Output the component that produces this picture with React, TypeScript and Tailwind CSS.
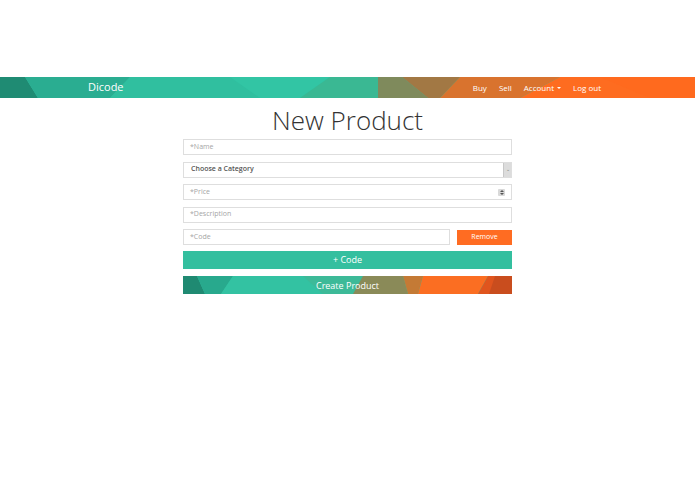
import React from 'react';

const font = { fontFamily: '"Open Sans", "Liberation Sans", sans-serif' };

function NavArt() {
  return (
    <svg className="absolute inset-0 h-full w-full" viewBox="0 0 695 21" preserveAspectRatio="none">
      <rect width="695" height="21" fill="#2fc0a0" />
      <polygon points="0,0 25,0 38,21 0,21" fill="#1f8b73" />
      <polygon points="25,0 130,0 110,21 38,21" fill="#2aad91" />
      <polygon points="130,0 230,0 260,21 110,21" fill="#30bf9f" />
      <polygon points="230,0 330,0 300,21 260,21" fill="#32c5a4" />
      <polygon points="330,0 378,0 378,21 300,21" fill="#3ab893" />
      <polygon points="378,0 402,0 428,21 378,21" fill="#7f8a5c" />
      <polygon points="402,0 460,0 440,21 428,21" fill="#a27844" />
      <polygon points="460,0 560,0 520,21 440,21" fill="#d9732e" />
      <polygon points="560,0 695,0 695,21 520,21" fill="#fe6c20" />
      <polygon points="600,0 695,0 695,21 650,21" fill="#ff6a1e" />
    </svg>
  );
}

function ButtonArt() {
  return (
    <svg className="absolute inset-0 h-full w-full" viewBox="0 0 329 18" preserveAspectRatio="none">
      <rect width="329" height="18" fill="#33bf9f" />
      <polygon points="0,0 14,0 22,18 0,18" fill="#1f8a72" />
      <polygon points="14,0 50,0 38,18 22,18" fill="#28a98d" />
      <polygon points="50,0 120,0 140,18 38,18" fill="#33c2a2" />
      <polygon points="120,0 180,0 170,18 140,18" fill="#3dba98" />
      <polygon points="180,0 220,0 225,18 170,18" fill="#8a8a58" />
      <polygon points="220,0 240,0 235,18 225,18" fill="#c47a35" />
      <polygon points="240,0 305,0 295,18 235,18" fill="#fb6e22" />
      <polygon points="305,0 329,0 329,18 295,18" fill="#e0551e" />
      <polygon points="312,0 329,0 329,18 306,18" fill="#c94d1e" />
    </svg>
  );
}

function Field({ placeholder, spinner }: { placeholder: string; spinner?: boolean }) {
  return (
    <div className="flex h-4 items-center justify-between border border-[#dedede] bg-white px-[6px]">
      <span className="text-[7px] text-[#a5a5a5]">{placeholder}</span>
      {spinner && (
        <span className="flex h-[7px] w-[7px] flex-col items-center justify-center gap-[1px] rounded-[1px] bg-[#d9d9d9]">
          <span className="h-0 w-0 border-x-[2px] border-b-[2px] border-x-transparent border-b-[#555]" />
          <span className="h-0 w-0 border-x-[2px] border-t-[2px] border-x-transparent border-t-[#555]" />
        </span>
      )}
    </div>
  );
}

export default function App() {
  return (
    <div className="min-h-screen bg-white" style={font}>
      <div className="h-[77px]" />
      <nav className="relative h-[21px] w-full overflow-hidden">
        <NavArt />
        <div className="relative flex h-full items-center">
          <span className="ml-[88px] text-[11px] text-white">Dicode</span>
          <div className="ml-auto mr-[94px] flex items-center gap-[12px] text-[8px] text-white">
            <span>Buy</span>
            <span>Sell</span>
            <span className="flex items-center gap-[3px]">
              Account
              <span className="h-0 w-0 border-x-[2px] border-t-[2px] border-x-transparent border-t-white" />
            </span>
            <span>Log out</span>
          </div>
        </div>
      </nav>

      <div className="mx-auto w-[329px]">
        <h1 className="mt-[10px] text-center text-[26px] font-light leading-[24px] text-[#333]">New Product</h1>

        <div className="mt-[7px] flex flex-col gap-[6.5px]">
          <Field placeholder="*Name" />
          <div className="flex h-4 items-center justify-between border border-[#dedede] bg-white pl-[7px]">
            <span className="text-[7px] font-semibold text-[#555]">Choose a Category</span>
            <span className="flex h-full w-[8px] items-center justify-center border-l border-[#c8c8c8] bg-[#dcdcdc] text-[5px] text-[#777]">
              ⌄
            </span>
          </div>
          <Field placeholder="*Price" spinner />
          <Field placeholder="*Description" />
          <div className="flex items-center gap-[7px]">
            <div className="flex-1">
              <Field placeholder="*Code" />
            </div>
            <button className="h-[15px] w-[55px] bg-[#ff6c22] text-[7px] text-white">Remove</button>
          </div>
        </div>

        <button className="mt-[6px] h-[18px] w-full bg-[#34bf9f] text-[9px] text-white">+ Code</button>
        <button className="relative mt-[7px] h-[18px] w-full overflow-hidden text-[9px] text-white">
          <ButtonArt />
          <span className="relative">Create Product</span>
        </button>
      </div>
    </div>
  );
}
